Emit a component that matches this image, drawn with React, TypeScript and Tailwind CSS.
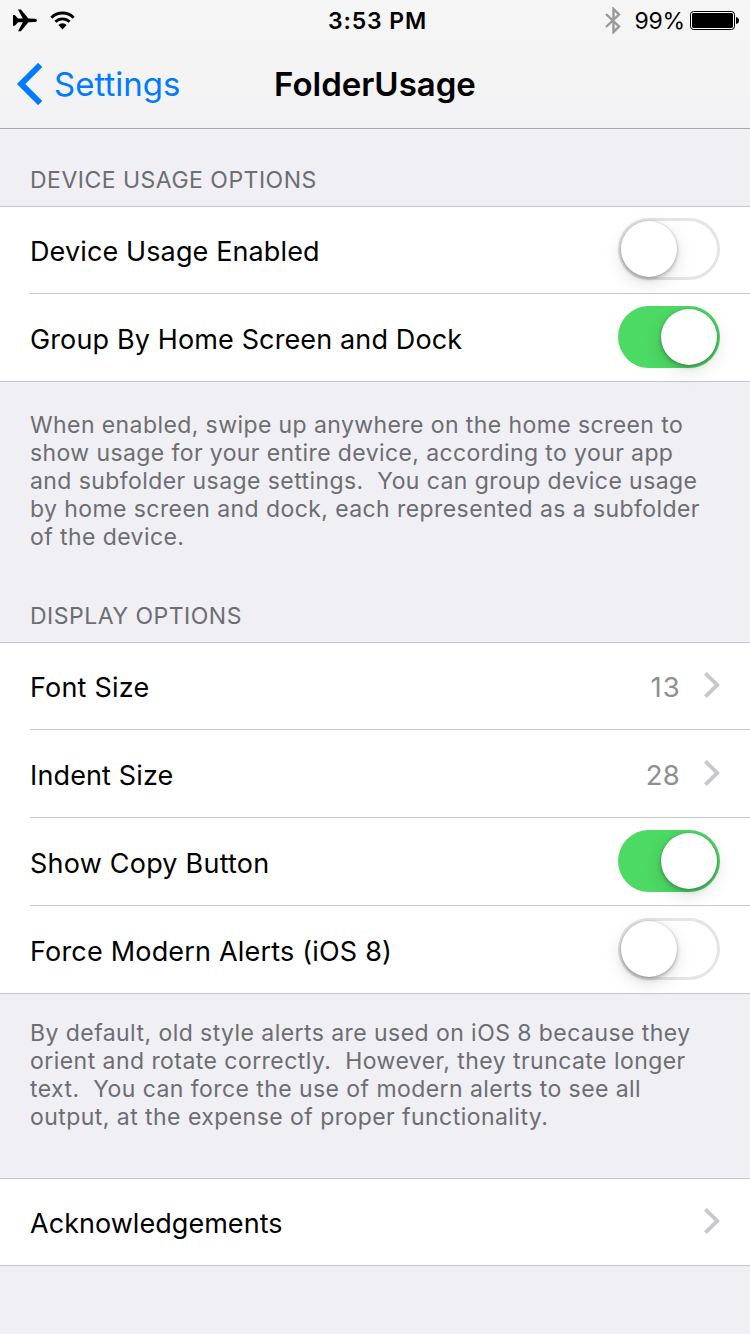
import React from "react";

type SwitchProps = { on: boolean };

function Switch({ on }: SwitchProps) {
  return (
    <div
      role="switch"
      aria-checked={on}
      className={
        on
          ? "flex h-[62px] w-[102px] items-center justify-end rounded-full bg-[#4cd964] p-[3px]"
          : "flex h-[62px] w-[102px] items-center justify-start rounded-full bg-white p-[3px] shadow-[inset_0_0_0_3px_#e5e5e5]"
      }
    >
      <div className="size-14 rounded-full bg-white shadow-[0_6px_18px_rgba(0,0,0,0.13),0_2px_4px_rgba(0,0,0,0.26),0_0_2px_rgba(0,0,0,0.16)]" />
    </div>
  );
}

function Chevron() {
  return (
    <svg className="-mt-px h-[26px] w-4" viewBox="0 0 16 26" fill="none">
      <path d="M1.4 1.4L13.2 13L1.4 24.6" stroke="#c7c7cc" strokeWidth="3.8" />
    </svg>
  );
}

type RowProps = {
  label: string;
  spacing: string;
  first?: boolean;
  children: React.ReactNode;
};

function Row({ label, spacing, first, children }: RowProps) {
  return (
    <div className={first ? "flex h-[86px] pl-[30px]" : "flex h-[88px] pl-[30px]"}>
      <div
        className={
          first
            ? "flex flex-1 items-end justify-between pr-[30px]"
            : "flex flex-1 items-end justify-between border-t border-[#c8c7cc] pr-[30px]"
        }
      >
        <span className={`flex h-[84px] items-center whitespace-pre text-[27px] leading-none text-black ${spacing}`}>
          {label}
        </span>
        <div className="flex h-[88px] items-center">{children}</div>
      </div>
    </div>
  );
}

function Group({ children }: { children: React.ReactNode }) {
  return <div className="border-y border-[#c8c7cc] bg-white">{children}</div>;
}

function Value({ spacing, children }: { spacing: string; children: string }) {
  return <span className={`mt-[5px] text-[27.5px] leading-none text-[#8e8e93] ${spacing}`}>{children}</span>;
}

export default function App() {
  return (
    <div className="h-[1334px] w-[750px] overflow-hidden bg-[#efeff4] font-['Inter','Liberation_Sans',sans-serif]">
      <header className="h-[129px] border-b border-[#a7a7ab] bg-linear-to-b from-[#f6f6f6] to-[#f2f2f4]">
        <div className="grid h-10 grid-cols-3 items-center pl-3 pr-[11px]">
          <div className="flex items-center gap-[13px]">
            <svg className="h-[23px] w-[25px]" viewBox="0 0 25 23">
              <path
                d="M1 6H2.8L6 9.6H10.8L6 0.6H8.9L16.4 9.6L23 9.8Q25 10.1 25 11.4Q25 12.7 23 13L16.4 13.2L8.9 22.3H6L10.8 13.2H6L2.8 16.8H1Z"
                fill="#000"
              />
            </svg>
            <svg className="h-[19px] w-[25px]" viewBox="0 0 25 19" fill="none">
              <path d="M1.4 6.7A15.7 15.7 0 0 1 23.6 6.7" stroke="#000" strokeWidth="3" />
              <path d="M5.4 10.8A10 10 0 0 1 19.6 10.8" stroke="#000" strokeWidth="2.8" />
              <path d="M8.4 14A5.8 5.8 0 0 1 16.6 14L12.5 18.4Z" fill="#000" />
            </svg>
          </div>
          <div className="pl-1 pt-[2px] text-center text-[23px] font-semibold leading-none tracking-[0.9px]">3:53 PM</div>
          <div className="flex items-center justify-end">
            <svg className="mr-[13px] h-[27px] w-4" viewBox="0 0 16 27" fill="none">
              <path d="M1 7L14 19.5L8.5 25V2L14 7.5L1 20" stroke="#999" strokeWidth="2.4" />
            </svg>
            <span className="mr-[5px] pt-[2px] text-[23px] leading-none tracking-[-0.2px]">99%</span>
            <svg className="h-[19px] w-[49px]" viewBox="0 0 49 19">
              <rect x="0.5" y="0.5" width="44" height="18" rx="3" fill="#fff" stroke="#000" strokeWidth="1" />
              <rect x="2" y="2" width="41" height="15" rx="1.4" fill="#000" />
              <path d="M46 6Q49 6.5 49 9.5Q49 12.5 46 13Z" fill="#000" />
            </svg>
          </div>
        </div>
        <nav className="grid h-[88px] grid-cols-3 items-center">
          <div className="flex items-center pl-4">
            <svg className="mr-[11px] h-[42px] w-[27px]" viewBox="0 0 27 42" fill="none">
              <path d="M24.2 2L5.2 21L24.2 40" stroke="#007aff" strokeWidth="6" />
            </svg>
            <span className="whitespace-nowrap text-[33px] leading-none text-[#007aff]">Settings</span>
          </div>
          <h1 className="text-center text-[33px] font-semibold leading-none">FolderUsage</h1>
        </nav>
      </header>

      <h2 className="flex h-[77px] items-end pb-[13px] pl-[30px] text-[23px] leading-[25px] tracking-[0.49px] text-[#6d6d72]">
        DEVICE USAGE OPTIONS
      </h2>
      <Group>
        <Row first label="Device Usage Enabled" spacing="tracking-[0.12px]">
          <Switch on={false} />
        </Row>
        <Row label="Group By Home Screen and Dock" spacing="tracking-[0.13px]">
          <Switch on />
        </Row>
      </Group>
      <div className="h-[182px] whitespace-pre pl-[30px] pt-[29px] text-[23px] leading-7 text-[#6d6d72]">
        <p className="tracking-[0.41px]">When enabled, swipe up anywhere on the home screen to</p>
        <p className="tracking-[0.4px]">show usage for your entire device, according to your app</p>
        <p className="tracking-[0.42px]">{"and subfolder usage settings.  You can group device usage"}</p>
        <p className="tracking-[0.42px]">by home screen and dock, each represented as a subfolder</p>
        <p className="tracking-[0.42px]">of the device.</p>
      </div>

      <h2 className="flex h-[78px] items-end pb-[13px] pl-[30px] text-[23px] leading-[25px] tracking-[0.5px] text-[#6d6d72]">
        DISPLAY OPTIONS
      </h2>
      <Group>
        <Row first label="Font Size" spacing="tracking-[0.2px]">
          <Value spacing="mr-[23px] tracking-[1.2px]">13</Value>
          <Chevron />
        </Row>
        <Row label="Indent Size" spacing="tracking-[0.13px]">
          <Value spacing="mr-6 tracking-[0.2px]">28</Value>
          <Chevron />
        </Row>
        <Row label="Show Copy Button" spacing="tracking-[0.22px]">
          <Switch on />
        </Row>
        <Row label="Force Modern Alerts (iOS 8)" spacing="tracking-[0.19px]">
          <Switch on={false} />
        </Row>
      </Group>
      <div className="h-[184px] whitespace-pre pl-[30px] pt-[25px] text-[23px] leading-7 text-[#6d6d72]">
        <p className="tracking-[0.44px]">By default, old style alerts are used on iOS 8 because they</p>
        <p className="tracking-[0.45px]">{"orient and rotate correctly.  However, they truncate longer"}</p>
        <p className="tracking-[0.43px]">{"text.  You can force the use of modern alerts to see all"}</p>
        <p className="tracking-[0.45px]">output, at the expense of proper functionality.</p>
      </div>
      <Group>
        <Row first label="Acknowledgements" spacing="tracking-[0.04px]">
          <Chevron />
        </Row>
      </Group>
    </div>
  );
}
